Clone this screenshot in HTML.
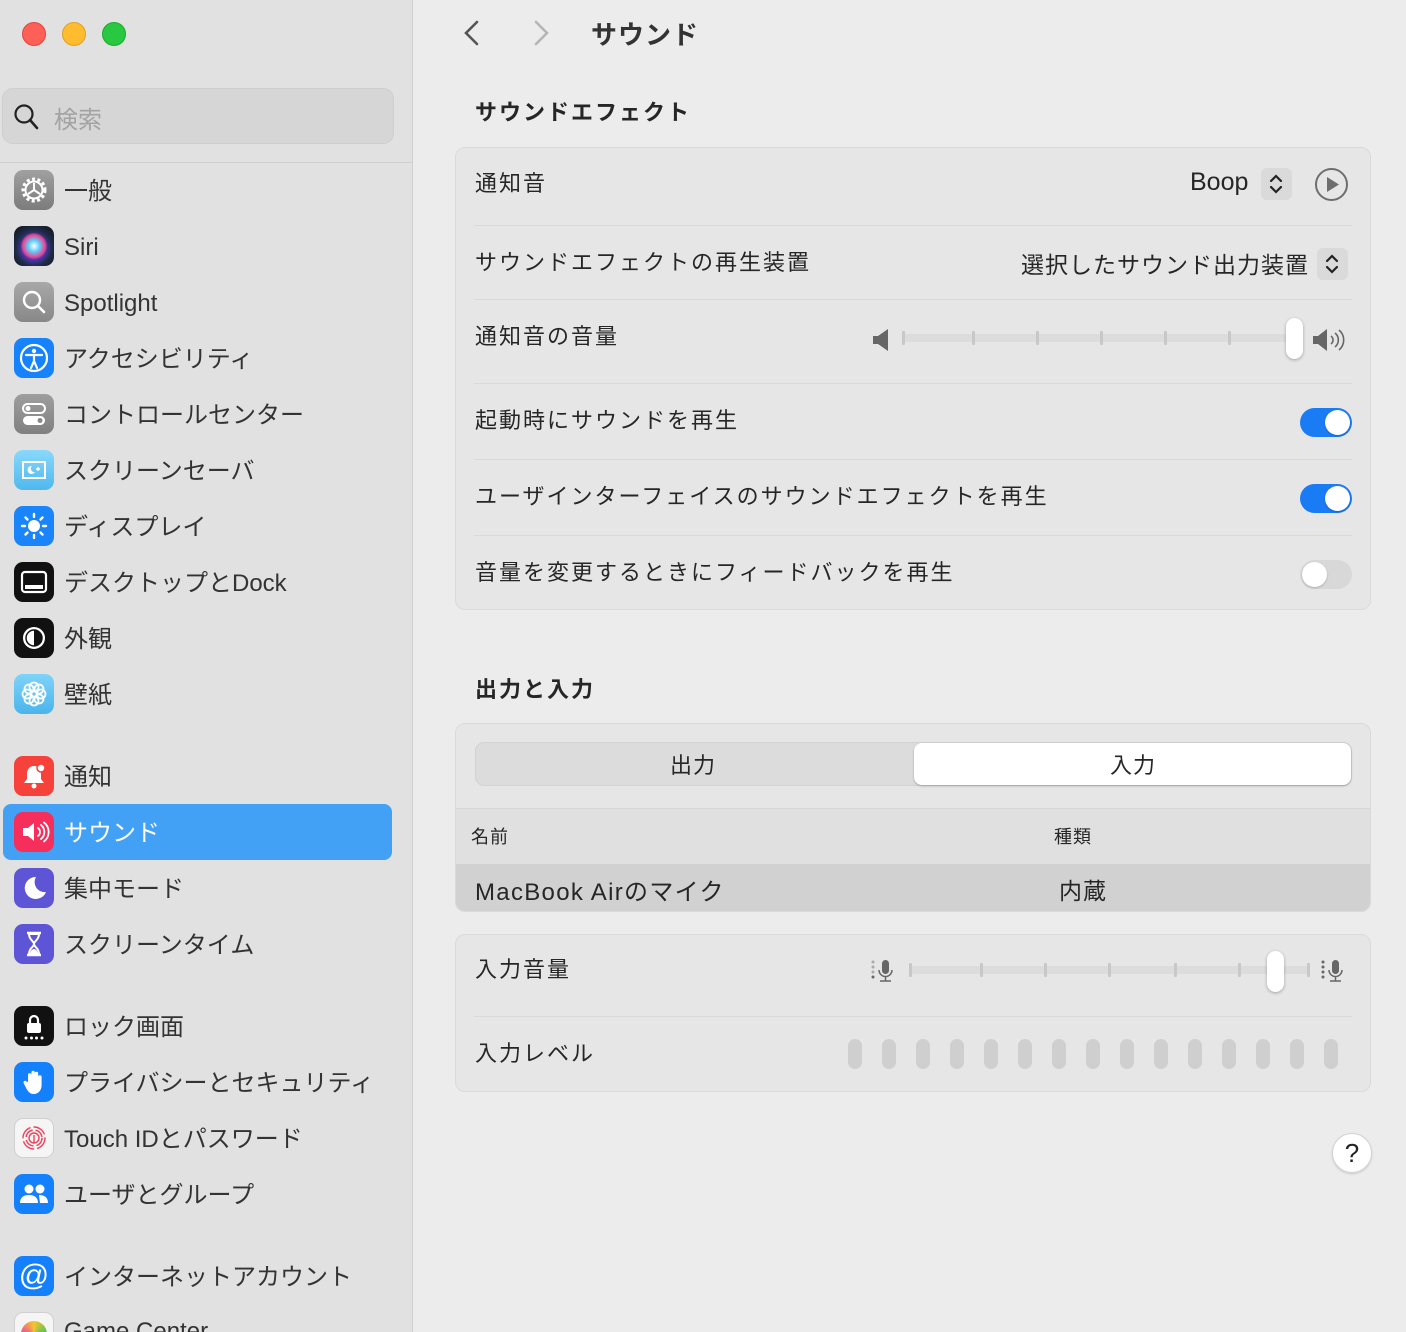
<!DOCTYPE html>
<html><head><meta charset="utf-8"><style>
*{margin:0;padding:0;box-sizing:border-box}
html{width:1406px;height:1332px;overflow:hidden}
body{width:1406px;height:1332px;overflow:hidden;background:#ececec;font-family:"Liberation Sans","Noto Sans CJK JP",sans-serif;color:#262626;position:relative}
.a{position:absolute}
#sb{left:0;top:0;width:413px;height:1332px;background:#e1e1e1;border-right:1px solid #d0d0d0}
.dot{width:24px;height:24px;border-radius:50%;top:22px}
.ic{position:absolute;left:14px;width:40px;height:40px;border-radius:9px;display:flex;align-items:center;justify-content:center;overflow:hidden}
.it{position:absolute;left:64px;font-size:24px;color:#333;line-height:30px;white-space:nowrap}
.card{position:absolute;left:455px;width:916px;background:#e6e6e6;border:1px solid #dadada;border-radius:10px}
.lbl{position:absolute;left:475px;font-size:22px;line-height:30px;white-space:nowrap;color:#262626;letter-spacing:2px}
.sep{position:absolute;left:474px;width:878px;height:1px;background:#d9d9d9}
.tg{position:absolute;left:1300px;width:52px;height:29px;border-radius:15px;background:#1a7cf5}
.tg::after{content:"";position:absolute;top:2px;left:25px;width:25px;height:25px;border-radius:50%;background:#fff;box-shadow:0 1px 2px rgba(0,0,0,.2)}
.tg.off{background:#d8d8d8}
.tg.off::after{left:2px}
.tick{position:absolute;width:3px;height:14px;background:#c8c8c8;border-radius:1px}
.thumb{position:absolute;width:17px;height:41px;border-radius:9px;background:#fff;box-shadow:0 1px 3px rgba(0,0,0,.3)}
.pill{position:absolute;top:1039px;width:14px;height:30px;border-radius:7px;background:#cfcfcf}
</style></head><body>
<div id="sb" class="a"></div>
<div class="a dot" style="left:22px;background:#fe5f57;border:1px solid #e0443e"></div>
<div class="a dot" style="left:62px;background:#febc2e;border:1px solid #dea123"></div>
<div class="a dot" style="left:102px;background:#28c840;border:1px solid #1aab29"></div>
<div class="a" style="left:2px;top:88px;width:392px;height:56px;background:#d6d6d6;border:1px solid #cecece;border-radius:11px"></div>
<svg class="a" style="left:12px;top:102px" width="30" height="30" viewBox="0 0 30 30"><circle cx="12" cy="12" r="8.5" fill="none" stroke="#222" stroke-width="2.2"/><line x1="18" y1="18" x2="25" y2="26" stroke="#222" stroke-width="2.6" stroke-linecap="round"/></svg>
<div class="a" style="left:54px;top:100px;font-size:24px;color:#a3a3a3">検索</div>
<div class="a" style="left:0;top:162px;width:413px;height:1px;background:#cfcfcf"></div>

<div class="a" style="left:3px;top:804px;width:389px;height:56px;background:#42a0f5;border-radius:8px"></div>

<div class="ic" style="top:170px;background:linear-gradient(#a0a0a0,#7c7c7c)"><svg width="32" height="32" viewBox="0 0 32 32"><circle cx="16" cy="16" r="11" fill="none" stroke="#fff" stroke-width="3" stroke-dasharray="3 2.5"/><circle cx="16" cy="16" r="8.5" fill="none" stroke="#fff" stroke-width="2"/><path d="M16 16V9M16 16l-6 4M16 16l6 4" stroke="#fff" stroke-width="2"/></svg></div>
<div class="ic" style="top:226px;background:radial-gradient(circle at 50% 55%,#e25ab8 0,#6b3ad8 30%,#1e2c4a 60%,#111 100%)"><div style="width:26px;height:26px;border-radius:50%;background:radial-gradient(circle,#fff 0,#5fd0ff 30%,#e64890 60%,transparent 75%)"></div></div>
<div class="ic" style="top:282px;background:linear-gradient(#a8a8a8,#888)"><svg width="30" height="30" viewBox="0 0 30 30"><circle cx="13" cy="13" r="8" fill="none" stroke="#fff" stroke-width="2.4"/><line x1="19" y1="19" x2="25" y2="25" stroke="#fff" stroke-width="2.6" stroke-linecap="round"/></svg></div>
<div class="ic" style="top:338px;background:#1682fb"><svg width="32" height="32" viewBox="0 0 32 32"><circle cx="16" cy="16" r="13" fill="none" stroke="#fff" stroke-width="2.2"/><circle cx="16" cy="9" r="2.2" fill="#fff"/><path d="M8 13h16M16 13v6l-3 7M16 19l3 7" stroke="#fff" stroke-width="2.2" fill="none" stroke-linecap="round"/></svg></div>
<div class="ic" style="top:394px;background:linear-gradient(#9e9e9e,#808080)"><svg width="30" height="30" viewBox="0 0 30 30"><rect x="4" y="5" width="22" height="9" rx="4.5" fill="none" stroke="#fff" stroke-width="2"/><circle cx="9" cy="9.5" r="2.5" fill="#fff"/><rect x="4" y="17" width="22" height="9" rx="4.5" fill="#fff"/><circle cx="21" cy="21.5" r="2.5" fill="#888"/></svg></div>
<div class="ic" style="top:450px;background:linear-gradient(#8ad8fb,#4fb8ee)"><svg width="30" height="30" viewBox="0 0 30 30"><rect x="4" y="7" width="22" height="16" fill="none" stroke="#fff" stroke-width="2"/><path d="M13 11a4 4 0 1 0 3 6a3.5 3.5 0 0 1-3-6z" fill="#fff"/><path d="M19 12v4M17 14h4" stroke="#fff" stroke-width="1.4"/></svg></div>
<div class="ic" style="top:506px;background:#1a84fb"><svg width="32" height="32" viewBox="0 0 32 32"><circle cx="16" cy="16" r="6" fill="#fff"/><g stroke="#fff" stroke-width="2.4" stroke-linecap="round"><path d="M16 4v3M16 25v3M4 16h3M25 16h3M7.5 7.5l2 2M22.5 22.5l2 2M7.5 24.5l2-2M22.5 9.5l2-2"/></g></svg></div>
<div class="ic" style="top:562px;background:#111"><svg width="30" height="30" viewBox="0 0 30 30"><rect x="3" y="5" width="24" height="20" rx="3" fill="none" stroke="#fff" stroke-width="2.2"/><rect x="6" y="18" width="18" height="4" fill="#fff"/></svg></div>
<div class="ic" style="top:618px;background:#111"><svg width="30" height="30" viewBox="0 0 30 30"><circle cx="15" cy="15" r="11" fill="#fff"/><path d="M15 7a8 8 0 0 1 0 16z" fill="#111"/><circle cx="15" cy="15" r="8" fill="none" stroke="#111" stroke-width="1.5"/></svg></div>
<div class="ic" style="top:674px;background:linear-gradient(#7fd3f8,#4ab5ec)"><svg width="32" height="32" viewBox="0 0 32 32"><g fill="none" stroke="#fff" stroke-width="1.8"><circle cx="16" cy="9" r="4.5"/><circle cx="16" cy="23" r="4.5"/><circle cx="9" cy="16" r="4.5"/><circle cx="23" cy="16" r="4.5"/><circle cx="11" cy="11" r="4.5"/><circle cx="21" cy="11" r="4.5"/><circle cx="11" cy="21" r="4.5"/><circle cx="21" cy="21" r="4.5"/></g></svg></div>

<div class="ic" style="top:756px;background:#f6423a"><svg width="30" height="30" viewBox="0 0 30 30"><path d="M15 5c-5 0-7 4-7 8v5l-3 4h20l-3-4v-5c0-4-2-8-7-8z" fill="#fff"/><circle cx="15" cy="25" r="2.5" fill="#fff"/><circle cx="22" cy="7" r="4" fill="#fff" stroke="#f6423a" stroke-width="1.5"/></svg></div>
<div class="ic" style="top:812px;background:#f52e5c"><svg width="32" height="32" viewBox="0 0 32 32"><path d="M5 12h5l6-5v18l-6-5H5z" fill="#fff"/><path d="M20 12a5 5 0 0 1 0 8M23 9a9 9 0 0 1 0 14M26 6.5a12 12 0 0 1 0 19" fill="none" stroke="#fff" stroke-width="1.8" stroke-linecap="round"/></svg></div>
<div class="ic" style="top:868px;background:#5e55d6"><svg width="30" height="30" viewBox="0 0 30 30"><path d="M17 4a11 11 0 1 0 10 15A10 10 0 0 1 17 4z" fill="#fff"/></svg></div>
<div class="ic" style="top:924px;background:#5e55d6"><svg width="30" height="30" viewBox="0 0 30 30"><path d="M8 4h14M8 26h14" stroke="#fff" stroke-width="2.4"/><path d="M10 5c0 6 5 7 5 10s-5 4-5 10h10c0-6-5-7-5-10s5-4 5-10z" fill="none" stroke="#fff" stroke-width="2"/><path d="M11 24c1-3 3-4 4-4s3 1 4 4z" fill="#fff"/></svg></div>

<div class="ic" style="top:1006px;background:#111"><svg width="30" height="30" viewBox="0 0 30 30"><path d="M11 12V9a4 4 0 0 1 8 0v3" fill="none" stroke="#fff" stroke-width="2.2"/><rect x="8" y="12" width="14" height="10" rx="2" fill="#fff"/><g fill="#fff"><circle cx="7" cy="27" r="1.5"/><circle cx="12.5" cy="27" r="1.5"/><circle cx="17.5" cy="27" r="1.5"/><circle cx="23" cy="27" r="1.5"/></g></svg></div>
<div class="ic" style="top:1062px;background:#1580fb"><svg width="30" height="30" viewBox="0 0 30 30"><path d="M9 15V8a1.7 1.7 0 0 1 3.4 0v6V5.5a1.7 1.7 0 0 1 3.4 0V14V6.5a1.7 1.7 0 0 1 3.4 0V15V10a1.7 1.7 0 0 1 3.4 0v8c0 5-3 9-8 9c-4 0-6-3-8-7l-2-4a1.6 1.6 0 0 1 2.8-1.5z" fill="#fff"/></svg></div>
<div class="ic" style="top:1118px;background:#f5f5f5;border:1px solid #d0d0d0"><svg width="30" height="30" viewBox="0 0 30 30"><g fill="none" stroke="#f0405a" stroke-width="1.4"><circle cx="15" cy="15" r="11" stroke-dasharray="14 3"/><circle cx="15" cy="15" r="8" stroke-dasharray="10 3"/><circle cx="15" cy="15" r="5"/><path d="M15 12v8"/></g></svg></div>
<div class="ic" style="top:1174px;background:#1580fb"><svg width="32" height="32" viewBox="0 0 32 32"><circle cx="11" cy="11" r="4.5" fill="#fff"/><circle cx="22" cy="11" r="4.5" fill="#fff"/><path d="M2 25c0-6 4-8 9-8s9 2 9 8zM21 17c5 0 9 2 9 8h-8" fill="#fff"/></svg></div>

<div class="ic" style="top:1256px;background:#1580fb"><span style="color:#fff;font-size:30px;line-height:30px">@</span></div>
<div class="ic" style="top:1312px;height:20px;border-radius:9px 9px 0 0;align-items:flex-start;background:#f5f5f5;border:1px solid #d0d0d0;border-bottom:none"><div style="width:26px;height:26px;border-radius:50%;background:conic-gradient(#f7c52c,#49c35c,#2a8ff8,#e64fa0,#f7c52c);margin-top:8px;flex:none"></div></div>

<div class="it" style="top:177px">一般</div>
<div class="it" style="top:233px">Siri</div>
<div class="it" style="top:289px">Spotlight</div>
<div class="it" style="top:345px">アクセシビリティ</div>
<div class="it" style="top:401px">コントロールセンター</div>
<div class="it" style="top:457px">スクリーンセーバ</div>
<div class="it" style="top:513px">ディスプレイ</div>
<div class="it" style="top:569px">デスクトップとDock</div>
<div class="it" style="top:625px">外観</div>
<div class="it" style="top:681px">壁紙</div>
<div class="it" style="top:763px">通知</div>
<div class="it" style="top:819px;color:#fff">サウンド</div>
<div class="it" style="top:875px">集中モード</div>
<div class="it" style="top:931px">スクリーンタイム</div>
<div class="it" style="top:1013px">ロック画面</div>
<div class="it" style="top:1069px">プライバシーとセキュリティ</div>
<div class="it" style="top:1125px">Touch IDとパスワード</div>
<div class="it" style="top:1181px">ユーザとグループ</div>
<div class="it" style="top:1263px">インターネットアカウント</div>
<div class="it" style="top:1317px">Game Center</div>

<svg class="a" style="left:458px;top:18px" width="100" height="32" viewBox="0 0 100 32"><path d="M19 4L8 15l11 11" fill="none" stroke="#555" stroke-width="2.6" stroke-linecap="round"/><path d="M78 4l11 11-11 11" fill="none" stroke="#b5b5b5" stroke-width="2.6" stroke-linecap="round"/></svg>
<div class="a" style="left:591px;top:15px;font-size:26px;font-weight:bold;color:#333;letter-spacing:1px">サウンド</div>
<div class="a" style="left:475px;top:95px;font-size:22px;font-weight:bold;letter-spacing:2px">サウンドエフェクト</div>

<div class="card" style="top:147px;height:463px"></div>
<div class="lbl" style="top:169px">通知音</div>
<div class="a" style="left:1190px;top:168px;font-size:25px">Boop</div>
<div class="a" style="left:1261px;top:168px;width:31px;height:32px;background:#dadada;border-radius:6px"></div>
<svg class="a" style="left:1266px;top:172px" width="20" height="24" viewBox="0 0 20 24"><path d="M5 9l5-5 5 5M5 15l5 5 5-5" fill="none" stroke="#222" stroke-width="2.2" stroke-linecap="round"/></svg>
<svg class="a" style="left:1314px;top:167px" width="35" height="35" viewBox="0 0 35 35"><circle cx="17.5" cy="17.5" r="15.5" fill="none" stroke="#6e6e6e" stroke-width="2"/><path d="M13 10v15l12-7.5z" fill="#6e6e6e"/></svg>
<div class="sep" style="top:225px"></div>
<div class="lbl" style="top:248px">サウンドエフェクトの再生装置</div>
<div class="a" style="right:97px;top:246px;font-size:23px;letter-spacing:1px;white-space:nowrap">選択したサウンド出力装置</div>
<div class="a" style="left:1317px;top:248px;width:31px;height:32px;background:#dadada;border-radius:6px"></div>
<svg class="a" style="left:1322px;top:252px" width="20" height="24" viewBox="0 0 20 24"><path d="M5 9l5-5 5 5M5 15l5 5 5-5" fill="none" stroke="#222" stroke-width="2.2" stroke-linecap="round"/></svg>
<div class="sep" style="top:299px"></div>
<div class="lbl" style="top:322px">通知音の音量</div>
<svg class="a" style="left:872px;top:328px" width="18" height="24" viewBox="0 0 18 24"><path d="M1 8h5l10-7v22L6 16H1z" fill="#666"/></svg>
<div class="a" style="left:903px;top:334px;width:392px;height:8px;background:#dcdcdc;border-radius:4px"></div>
<div class="tick" style="left:902px;top:331px"></div><div class="tick" style="left:972px;top:331px"></div><div class="tick" style="left:1036px;top:331px"></div><div class="tick" style="left:1100px;top:331px"></div><div class="tick" style="left:1164px;top:331px"></div><div class="tick" style="left:1228px;top:331px"></div>
<div class="thumb" style="left:1286px;top:318px"></div>
<svg class="a" style="left:1312px;top:327px" width="38" height="26" viewBox="0 0 38 26"><path d="M1 9h5l9-7v22L6 17H1z" fill="#666"/><path d="M19 9a5 5 0 0 1 0 8M23 6a9 9 0 0 1 0 14M27 3a13 13 0 0 1 0 20" fill="none" stroke="#666" stroke-width="1.6"/></svg>
<div class="sep" style="top:383px"></div>
<div class="lbl" style="top:406px">起動時にサウンドを再生</div>
<div class="tg" style="top:408px"></div>
<div class="sep" style="top:459px"></div>
<div class="lbl" style="top:482px">ユーザインターフェイスのサウンドエフェクトを再生</div>
<div class="tg" style="top:484px"></div>
<div class="sep" style="top:535px"></div>
<div class="lbl" style="top:558px">音量を変更するときにフィードバックを再生</div>
<div class="tg off" style="top:560px"></div>

<div class="a" style="left:475px;top:672px;font-size:22px;font-weight:bold;letter-spacing:2px">出力と入力</div>
<div class="card" style="top:723px;height:189px;overflow:hidden">
 <div class="a" style="left:19px;top:18px;width:877px;height:44px;background:#dcdcdc;border:1px solid #d2d2d2;border-radius:9px"></div>
 <div class="a" style="left:458px;top:19px;width:437px;height:42px;background:#fff;border-radius:8px;box-shadow:0 1px 2px rgba(0,0,0,.25)"></div>
 <div class="a" style="left:214px;top:24px;font-size:22px;letter-spacing:1px">出力</div>
 <div class="a" style="left:654px;top:24px;font-size:22px;letter-spacing:1px">入力</div>
 <div class="a" style="left:0;top:84px;width:916px;height:56px;background:#e0e0e0;border-top:1px solid #d6d6d6"></div>
 <div class="a" style="left:15px;top:99px;font-size:18px;letter-spacing:1px">名前</div>
 <div class="a" style="left:598px;top:99px;font-size:18px;letter-spacing:1px">種類</div>
 <div class="a" style="left:0;top:140px;width:916px;height:49px;background:#d1d1d1"></div>
 <div class="a" style="left:19px;top:148px;font-size:24px;letter-spacing:1.3px;white-space:nowrap">MacBook Airのマイク</div>
 <div class="a" style="left:603px;top:148px;font-size:23px;letter-spacing:1px">内蔵</div>
</div>

<div class="card" style="top:934px;height:158px"></div>
<div class="lbl" style="top:955px">入力音量</div>
<svg class="a" style="left:870px;top:958px" width="30" height="30" viewBox="0 0 30 30"><g fill="#aaa"><circle cx="3" cy="4" r="1.5"/><circle cx="3" cy="9" r="1.5"/><circle cx="3" cy="14" r="1.5"/></g><circle cx="3" cy="19" r="1.5" fill="#666"/><rect x="12" y="2" width="7" height="14" rx="3.5" fill="#666"/><path d="M9 12a6.5 6.5 0 0 0 13 0M15.5 19v4M10 23h11" fill="none" stroke="#666" stroke-width="1.5"/></svg>
<div class="a" style="left:910px;top:966px;width:400px;height:8px;background:#dcdcdc;border-radius:4px"></div>
<div class="tick" style="left:909px;top:963px"></div><div class="tick" style="left:980px;top:963px"></div><div class="tick" style="left:1044px;top:963px"></div><div class="tick" style="left:1108px;top:963px"></div><div class="tick" style="left:1174px;top:963px"></div><div class="tick" style="left:1238px;top:963px"></div><div class="tick" style="left:1307px;top:963px"></div>
<div class="thumb" style="left:1267px;top:951px"></div>
<svg class="a" style="left:1318px;top:958px" width="32" height="30" viewBox="0 0 32 30"><g fill="#666"><circle cx="5" cy="4" r="1.5"/><circle cx="5" cy="9" r="1.5"/><circle cx="5" cy="14" r="1.5"/><circle cx="5" cy="19" r="1.5"/></g><rect x="14" y="2" width="7" height="14" rx="3.5" fill="#666"/><path d="M11 12a6.5 6.5 0 0 0 13 0M17.5 19v4M12 23h11" fill="none" stroke="#666" stroke-width="1.5"/></svg>
<div class="sep" style="top:1016px"></div>
<div class="lbl" style="top:1039px">入力レベル</div>
<div class="pill" style="left:848px"></div><div class="pill" style="left:882px"></div><div class="pill" style="left:916px"></div><div class="pill" style="left:950px"></div><div class="pill" style="left:984px"></div><div class="pill" style="left:1018px"></div><div class="pill" style="left:1052px"></div><div class="pill" style="left:1086px"></div><div class="pill" style="left:1120px"></div><div class="pill" style="left:1154px"></div><div class="pill" style="left:1188px"></div><div class="pill" style="left:1222px"></div><div class="pill" style="left:1256px"></div><div class="pill" style="left:1290px"></div><div class="pill" style="left:1324px"></div>

<div class="a" style="left:1332px;top:1133px;width:40px;height:40px;border-radius:50%;background:#fff;border:1px solid #d4d4d4;box-shadow:0 1px 2px rgba(0,0,0,.15);text-align:center;font-size:26px;line-height:38px;color:#222">?</div>
</body></html>
